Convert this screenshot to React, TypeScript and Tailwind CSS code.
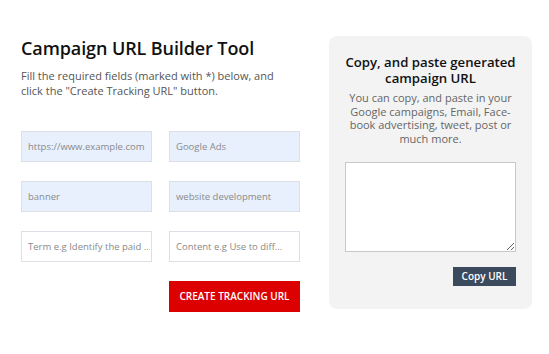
import React from "react";

export default function App() {
  const font = { fontFamily: '"Open Sans", "Noto Sans", sans-serif' };
  const inputCls =
    "h-[31px] w-[131px] border border-[#dcdfe6] pl-[6px] pr-[1px] text-[9.5px] text-[#555] placeholder:text-[#8a8a8a] outline-none";
  return (
    <div className="w-[549px] h-[354px] bg-white flex" style={font}>
      <div className="pl-[21px] pt-[36px] w-[329px] shrink-0 flex flex-col">
        <h1 className="text-[18px] font-semibold text-[#111] leading-[24px] tracking-[-0.1px]">
          Campaign URL Builder Tool
        </h1>
        <p className="mt-[8px] text-[11px] leading-[15px] text-[#555]">
          Fill the required fields (marked with *) below, and
          <br />
          click the "Create Tracking URL" button.
        </p>
        <div className="mt-[33px] grid grid-cols-[131px_131px] gap-x-[17px] gap-y-[19px]">
          <input className={`${inputCls} bg-[#e8f0fe]`} placeholder="https://www.example.com" readOnly />
          <input className={`${inputCls} bg-[#e8f0fe]`} placeholder="Google Ads" readOnly />
          <input className={`${inputCls} bg-[#e8f0fe]`} placeholder="banner" readOnly />
          <input className={`${inputCls} bg-[#e8f0fe]`} placeholder="website development" readOnly />
          <input className={`${inputCls} bg-white`} placeholder="Term e.g Identify the paid ..." readOnly />
          <input className={`${inputCls} bg-white`} placeholder="Content e.g Use to diff..." readOnly />
          <div />
          <button className="h-[31px] w-[131px] bg-[#dd0000] text-white text-[10px] font-semibold">
            CREATE TRACKING URL
          </button>
        </div>
      </div>
      <div className="mt-[36px] w-[203px] h-[273px] shrink-0 rounded-[8px] bg-[#f3f3f3] px-[15px] pt-[18px] flex flex-col items-center">
        <h2 className="text-[13.2px] font-semibold text-[#111] leading-[16px] text-center whitespace-nowrap">
          Copy, and paste generated
          <br />
          campaign URL
        </h2>
        <p className="mt-[5px] text-[11px] leading-[13.5px] text-[#666] text-center whitespace-nowrap">
          You can copy, and paste in your
          <br />
          Google campaigns, Email, Face-
          <br />
          book advertising, tweet, post or
          <br />
          much more.
        </p>
        <textarea className="mt-[17px] w-[171px] h-[90px] shrink-0 border border-[#c8c8c8] bg-white outline-none" readOnly />
        <div className="w-[171px] flex justify-end mt-[15px]">
          <button className="w-[63px] h-[19px] bg-[#3b4a5c] text-white text-[10px] font-semibold">
            Copy URL
          </button>
        </div>
      </div>
    </div>
  );
}
